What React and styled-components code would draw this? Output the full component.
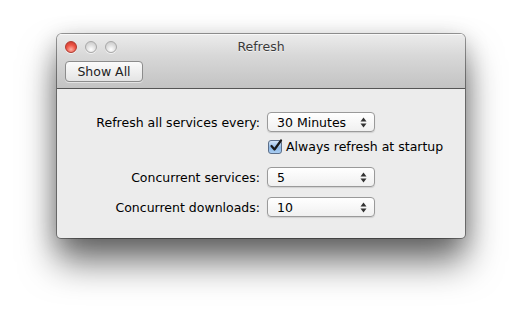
import React from "react";
import styled, { createGlobalStyle } from "styled-components";

const GlobalStyle = createGlobalStyle`
  html, body {
    margin: 0;
    padding: 0;
    background: #ffffff;
  }
  body {
    font-family: "DejaVu Sans", "Liberation Sans", sans-serif;
    font-size: 12.5px;
    color: #000;
  }
`;

const Page = styled.div`
  width: 521px;
  height: 317px;
  padding: 34px 0 0 57px;
  box-sizing: border-box;
  overflow: hidden;
`;

const Window = styled.div`
  width: 408px;
  height: 204px;
  border-radius: 5px 5px 4px 4px;
  background: #ececec;
  box-shadow: 0 0 0 1px rgba(0, 0, 0, 0.38), 0 24px 36px rgba(0, 0, 0, 0.55),
    0 6px 24px rgba(0, 0, 0, 0.22);
  display: flex;
  flex-direction: column;
  overflow: hidden;
`;

const Toolbar = styled.div`
  height: 54px;
  background: linear-gradient(#ececec, #d8d8d8 40%, #c3c3c3);
  border-bottom: 1px solid #555;
  box-shadow: inset 0 1px 0 #f8f8f8;
  display: flex;
  flex-direction: column;
  padding: 0 8px;
`;

const TitleRow = styled.div`
  height: 24px;
  display: flex;
  align-items: center;
  position: relative;
`;

const Lights = styled.div`
  display: flex;
  gap: 8px;
  margin-top: 1px;
`;

const Light = styled.span`
  width: 12px;
  height: 12px;
  border-radius: 50%;
  box-sizing: border-box;
  border: 1px solid ${(p) => (p.$red ? "#b0392e" : "#a8a8a8")};
  background: ${(p) =>
    p.$red
      ? "radial-gradient(circle at 50% 75%, #ffb0a4, #ee5546 50%, #c2342a)"
      : "radial-gradient(circle at 50% 75%, #ffffff, #dcdcdc 55%, #c4c4c4)"};
  box-shadow: 0 1px 0 rgba(255, 255, 255, 0.6);
`;

const Title = styled.div`
  position: absolute;
  left: 0;
  right: 0;
  text-align: center;
  font-size: 12.5px;
  color: #3a3a3a;
  text-shadow: 0 1px 0 rgba(255, 255, 255, 0.6);
  pointer-events: none;
`;

const ShowAll = styled.button`
  margin-top: 3px;
  width: 78px;
  height: 21px;
  border: 1px solid #8c8c8c;
  border-radius: 4px;
  background: linear-gradient(#fbfbfb, #e4e4e4);
  box-shadow: 0 1px 0 rgba(255, 255, 255, 0.5);
  font-family: inherit;
  font-size: 12.5px;
  color: #222;
  padding: 0;
`;

const Content = styled.div`
  flex: 1;
  padding-top: 23px;
`;

const Form = styled.div`
  display: grid;
  grid-template-columns: 203px 1fr;
  column-gap: 7px;
  align-items: center;
`;

const Label = styled.div`
  text-align: right;
  margin-top: ${(p) => p.$top || 0}px;
  white-space: nowrap;
`;

const Cell = styled.div`
  margin-top: ${(p) => p.$top || 0}px;
  display: flex;
  align-items: center;
`;

const Popup = styled.div`
  width: 108px;
  height: 20px;
  box-sizing: border-box;
  border: 1px solid #9a9a9a;
  border-radius: 4px;
  background: linear-gradient(#ffffff, #f0f0f0);
  box-shadow: 0 1px 1px rgba(0, 0, 0, 0.12);
  display: flex;
  align-items: center;
  justify-content: space-between;
  padding: 0 7px 0 9px;
`;

const Arrows = styled.svg`
  display: block;
`;

const Check = styled.label`
  display: flex;
  align-items: center;
  gap: 4px;
  height: 15px;
  white-space: nowrap;
  margin-left: 1px;
`;

const Box = styled.span`
  width: 14px;
  height: 14px;
  box-sizing: border-box;
  border: 1px solid #5c6f8a;
  border-radius: 3px;
  background: linear-gradient(#d4e5f7, #8db8e6 55%, #a9cdf2);
  position: relative;
  display: block;
`;

const Tick = styled.svg`
  position: absolute;
  left: 0;
  top: -2px;
`;

function Stepper() {
  return (
    <Arrows width="7" height="11" viewBox="0 0 7 11">
      <path d="M3.5 0.5 L6.5 4.5 L0.5 4.5 Z" fill="#333" />
      <path d="M3.5 10.5 L6.5 6.5 L0.5 6.5 Z" fill="#333" />
    </Arrows>
  );
}

function Select({ value }) {
  return (
    <Popup>
      <span>{value}</span>
      <Stepper />
    </Popup>
  );
}

export default function App() {
  return (
    <>
      <GlobalStyle />
      <Page>
        <Window>
          <Toolbar>
            <TitleRow>
              <Lights>
                <Light $red />
                <Light />
                <Light />
              </Lights>
              <Title>Refresh</Title>
            </TitleRow>
            <ShowAll>Show All</ShowAll>
          </Toolbar>
          <Content>
            <Form>
              <Label>Refresh all services every:</Label>
              <Cell>
                <Select value="30 Minutes" />
              </Cell>
              <div />
              <Cell $top={7}>
                <Check>
                  <Box>
                    <Tick width="14" height="14" viewBox="0 0 14 14">
                      <path d="M2.5 7 L5.5 10.5 L12 1.5" fill="none" stroke="#1a1a1a" strokeWidth="2.2" strokeLinecap="round" strokeLinejoin="round" />
                    </Tick>
                  </Box>
                  Always refresh at startup
                </Check>
              </Cell>
              <Label $top={13}>Concurrent services:</Label>
              <Cell $top={13}>
                <Select value="5" />
              </Cell>
              <Label $top={10}>Concurrent downloads:</Label>
              <Cell $top={10}>
                <Select value="10" />
              </Cell>
            </Form>
          </Content>
        </Window>
      </Page>
    </>
  );
}
